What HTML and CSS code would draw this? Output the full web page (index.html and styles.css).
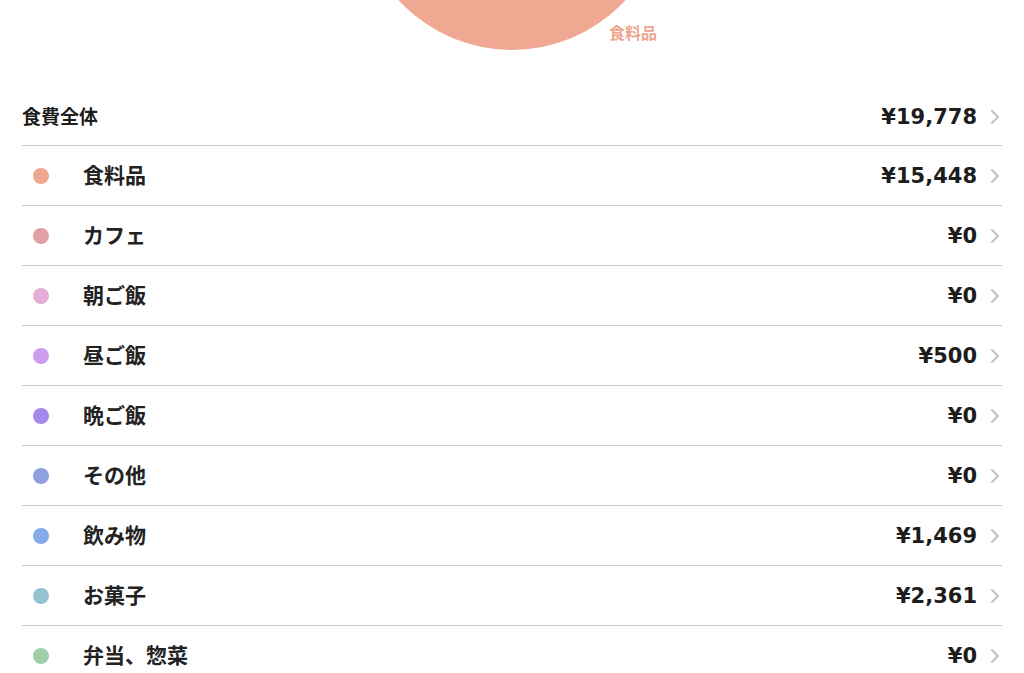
FILE: index.html
```html
<!DOCTYPE html>
<html lang="ja">
<head>
<meta charset="utf-8">
<link rel="stylesheet" href="styles.css">
</head>
<body>
<div class="chart">
  <div class="pie"></div>
  <span class="pie-label">食料品</span>
</div>
<div class="list">
  <div class="total">
    <span class="total-name">食費全体</span>
    <span class="amount">¥19,778</span>
    <svg class="chev" viewBox="0 0 10 16"><polyline points="2,2 8,8 2,14"/></svg>
  </div>
  <div class="row"><span class="dot c1"></span><span class="name">食料品</span><span class="amount">¥15,448</span><svg class="chev" viewBox="0 0 10 16"><polyline points="2,2 8,8 2,14"/></svg></div>
  <div class="row"><span class="dot c2"></span><span class="name">カフェ</span><span class="amount">¥0</span><svg class="chev" viewBox="0 0 10 16"><polyline points="2,2 8,8 2,14"/></svg></div>
  <div class="row"><span class="dot c3"></span><span class="name">朝ご飯</span><span class="amount">¥0</span><svg class="chev" viewBox="0 0 10 16"><polyline points="2,2 8,8 2,14"/></svg></div>
  <div class="row"><span class="dot c4"></span><span class="name">昼ご飯</span><span class="amount">¥500</span><svg class="chev" viewBox="0 0 10 16"><polyline points="2,2 8,8 2,14"/></svg></div>
  <div class="row"><span class="dot c5"></span><span class="name">晩ご飯</span><span class="amount">¥0</span><svg class="chev" viewBox="0 0 10 16"><polyline points="2,2 8,8 2,14"/></svg></div>
  <div class="row"><span class="dot c6"></span><span class="name">その他</span><span class="amount">¥0</span><svg class="chev" viewBox="0 0 10 16"><polyline points="2,2 8,8 2,14"/></svg></div>
  <div class="row"><span class="dot c7"></span><span class="name">飲み物</span><span class="amount">¥1,469</span><svg class="chev" viewBox="0 0 10 16"><polyline points="2,2 8,8 2,14"/></svg></div>
  <div class="row"><span class="dot c8"></span><span class="name">お菓子</span><span class="amount">¥2,361</span><svg class="chev" viewBox="0 0 10 16"><polyline points="2,2 8,8 2,14"/></svg></div>
  <div class="row"><span class="dot c9"></span><span class="name">弁当、惣菜</span><span class="amount">¥0</span><svg class="chev" viewBox="0 0 10 16"><polyline points="2,2 8,8 2,14"/></svg></div>
</div>
</body>
</html>
```
FILE: styles.css
```css
html, body {
  margin: 0;
  padding: 0;
  background: #ffffff;
}
body {
  font-family: "Liberation Sans", "Noto Sans CJK JP", sans-serif;
  color: #1f1f1f;
  overflow: hidden;
}
.chart {
  position: relative;
  height: 88px;
  overflow: hidden;
  display: flex;
  justify-content: center;
}
.pie {
  width: 308px;
  height: 308px;
  border-radius: 50%;
  background: #f0a892;
  margin-top: -258px;
  flex: none;
}
.pie-label {
  position: absolute;
  left: 609px;
  top: 21px;
  font-family: "Noto Sans CJK JP", sans-serif;
  font-weight: 700;
  font-size: 16px;
  line-height: 22px;
  color: #eca58f;
}
.list {
  padding: 0 22px;
}
.total, .row {
  display: flex;
  align-items: center;
  border-bottom: 1px solid #c8c8c8;
}
.total {
  height: 57px;
}
.row {
  height: 59px;
}
.total-name {
  font-family: "Noto Sans CJK JP", sans-serif;
  font-weight: 700;
  font-size: 19px;
  line-height: 26px;
  padding-bottom: 2px;
  flex: 1;
  color: #1d1d1d;
}
.dot {
  width: 16px;
  height: 16px;
  border-radius: 50%;
  margin-left: 11px;
  margin-right: 34px;
  flex: none;
}
.name {
  font-family: "Noto Sans CJK JP", sans-serif;
  font-weight: 700;
  font-size: 21px;
  line-height: 28px;
  padding-bottom: 3px;
  flex: 1;
  color: #222;
}
.amount {
  font-family: "DejaVu Sans", "Liberation Sans", sans-serif;
  font-weight: 700;
  font-size: 21px;
  color: #1d1d1d;
}
.chev {
  width: 10px;
  height: 16px;
  margin-left: 13px;
  margin-right: 2px;
  flex: none;
  fill: none;
  stroke: #c4c4c7;
  stroke-width: 2.2;
  stroke-linecap: round;
  stroke-linejoin: round;
}
.c1 { background: #f0a58e; }
.c2 { background: #e1a0a6; }
.c3 { background: #e6acd8; }
.c4 { background: #cc9ef0; }
.c5 { background: #a488ea; }
.c6 { background: #909fe0; }
.c7 { background: #86abea; }
.c8 { background: #95c1d1; }
.c9 { background: #9dcfa9; }
```
